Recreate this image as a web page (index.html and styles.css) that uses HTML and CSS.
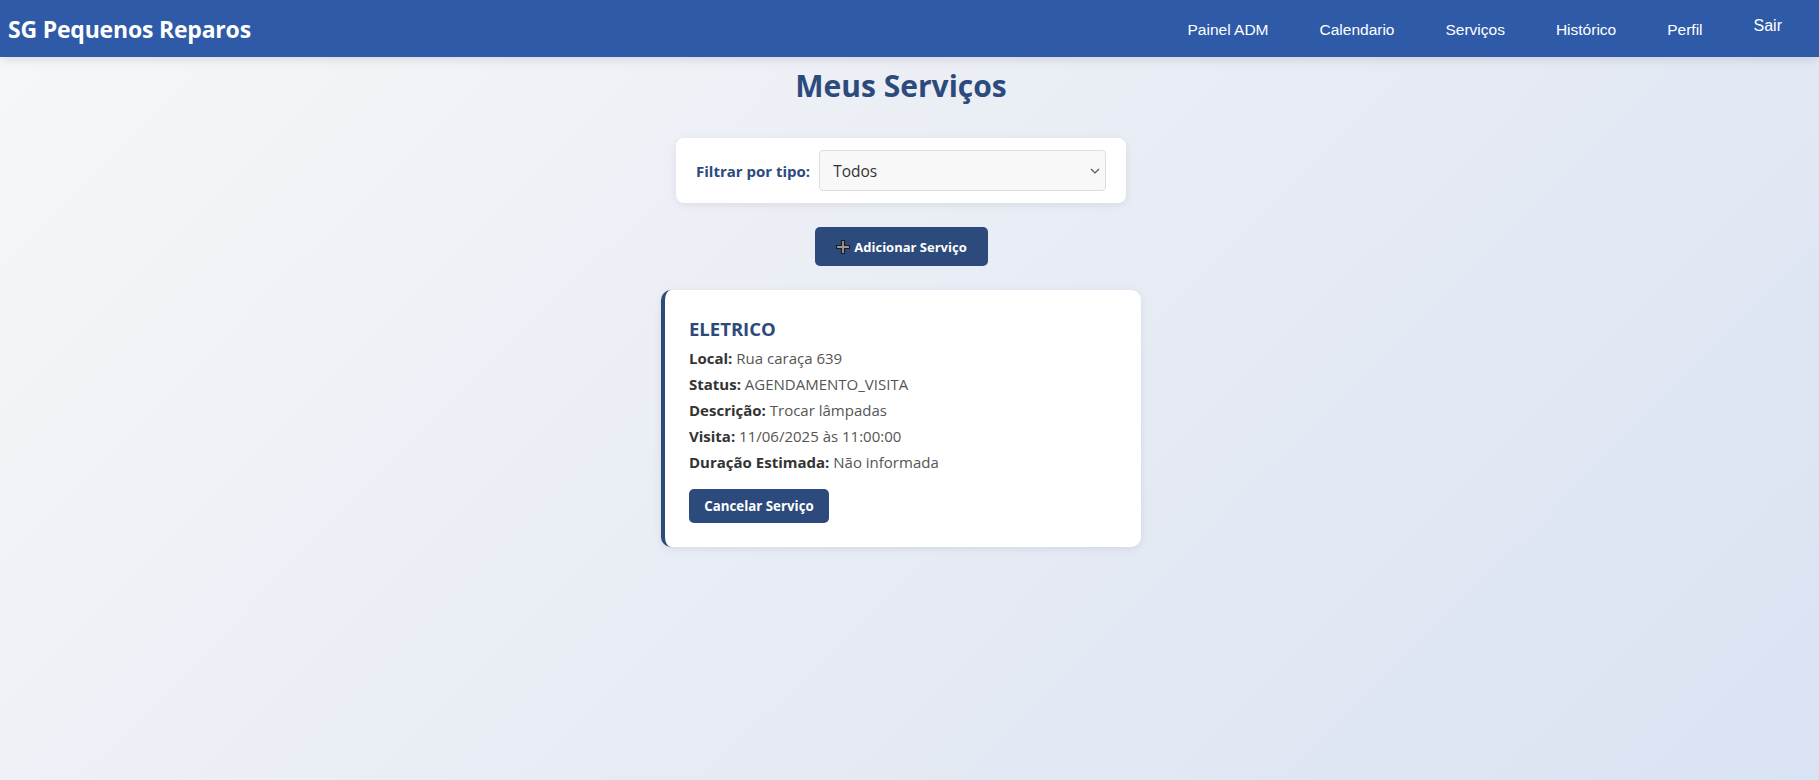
FILE: index.html
```html
<!DOCTYPE html>
<html lang="pt-BR">
<head>
    <meta charset="UTF-8">
    <title>Meus Serviços</title>
    <link rel="stylesheet" href="styles.css">
</head>
<body>
<header class="topbar">
    <div class="logo">SG Pequenos Reparos</div>
    <nav class="menu">
        <a href="#">Painel ADM</a>
        <a href="#">Calendario</a>
        <a href="#">Serviços</a>
        <a href="#">Histórico</a>
        <a href="#">Perfil</a>
        <button class="sair" type="button">Sair</button>
    </nav>
</header>

<main class="conteudo">
    <h1 class="titulo">Meus Serviços</h1>

    <div class="filtro">
        <label for="tipo">Filtrar por tipo:</label>
        <div class="select-wrap">
            <select id="tipo">
                <option>Todos</option>
                <option>Eletrico</option>
                <option>Hidraulico</option>
            </select>
            <svg class="seta" width="10" height="6" viewBox="0 0 10 6"><path d="M1 1 L5 5 L9 1" fill="none" stroke="#555" stroke-width="1.2"/></svg>
        </div>
    </div>

    <button class="btn btn-add" type="button">
        <svg class="mais" width="16" height="16" viewBox="0 0 16 16">
            <path d="M6.5 1.5 H9.5 V6.5 H14.5 V9.5 H9.5 V14.5 H6.5 V9.5 H1.5 V6.5 H6.5 Z" fill="#9a9a9a" stroke="#1b1b1b" stroke-width="1.2" stroke-linejoin="round"/>
        </svg>
        Adicionar Serviço
    </button>

    <div class="card">
        <h3>ELETRICO</h3>
        <p><b>Local:</b> Rua caraça 639</p>
        <p><b>Status:</b> AGENDAMENTO_VISITA</p>
        <p><b>Descrição:</b> Trocar lâmpadas</p>
        <p><b>Visita:</b> 11/06/2025 às 11:00:00</p>
        <p><b>Duração Estimada:</b> Não informada</p>
        <button class="btn btn-cancel" type="button">Cancelar Serviço</button>
    </div>
</main>
</body>
</html>
```

FILE: styles.css
```css
*{box-sizing:border-box;}
html,body{margin:0;padding:0;}
body{
    font-family:"Open Sans","Noto Sans",sans-serif;
    min-height:780px;
    background:linear-gradient(135deg,#f6f7f9 0%,#e8ecf4 50%,#dae3f3 100%);
    color:#333;
}

.topbar{
    height:57px;
    background:#2f5aa8;
    display:flex;
    align-items:center;
    justify-content:space-between;
    padding:0 37px 0 8px;
    box-shadow:0 2px 10px rgba(0,0,0,0.12);
}
.logo{color:#fff;font-size:23px;font-weight:700;letter-spacing:-0.2px;}
.menu{display:flex;align-items:center;gap:51px;}
.menu a{
    color:#fff;text-decoration:none;
    font-family:"Liberation Sans",Arial,sans-serif;
    font-size:15.5px;padding-top:3px;
}
.sair{
    background:none;border:none;padding:0;color:#fff;cursor:pointer;
    font-family:"Liberation Sans",Arial,sans-serif;
    font-size:16px;margin-bottom:5px;
}

.conteudo{display:flex;flex-direction:column;align-items:center;padding-right:17px;}
.titulo{
    margin:8px 0 32px;
    font-size:30px;font-weight:700;color:#2c4a7c;
}

.filtro{
    width:450px;height:65px;
    background:#fff;border-radius:8px;
    box-shadow:0 2px 8px rgba(0,0,0,0.08);
    display:flex;align-items:center;
    padding:0 20px;gap:9px;
}
.filtro label{font-size:15px;font-weight:700;color:#2c4a7c;white-space:nowrap;}
.select-wrap{position:relative;flex:1;}
.select-wrap select{
    width:100%;height:41px;
    appearance:none;-webkit-appearance:none;
    background:#f8f8f8;border:1px solid #ddd;border-radius:4px;
    padding:0 13px;font-family:inherit;font-size:15.5px;color:#333;
}
.seta{position:absolute;right:6px;top:18px;pointer-events:none;}

.btn{
    background:#2c4a7c;color:#fff;border:none;border-radius:5px;
    font-family:"Open Sans","Noto Sans",sans-serif;
    font-weight:700;font-size:13px;cursor:pointer;
}
.btn-add{
    margin-top:24px;
    width:173px;height:39px;
    display:flex;align-items:center;justify-content:center;gap:3px;
}
.mais{display:block;}

.card{
    margin-top:24px;
    width:480px;
    background:#fff;
    border-left:4px solid #2c4a7c;
    border-radius:10px;
    box-shadow:0 2px 8px rgba(0,0,0,0.08);
    padding:26px 24px 24px 24px;
}
.card h3{margin:0 0 4px;font-size:18.5px;font-weight:700;color:#2c4a7c;}
.card p{margin:0;font-size:15px;line-height:26px;color:#555;}
.card p b{color:#333;}
.btn-cancel{margin-top:14px;width:140px;height:34px;padding:0;font-size:13.3px;}
```
